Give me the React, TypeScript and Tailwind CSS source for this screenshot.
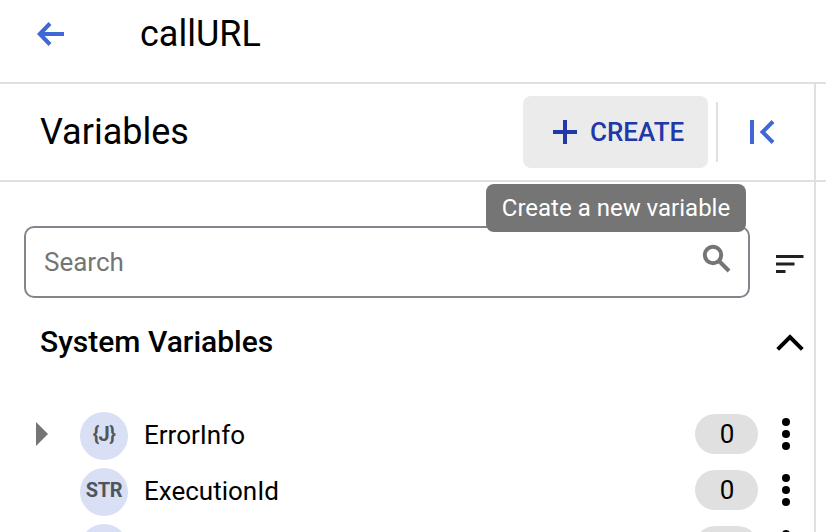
const rows = [
  { name: 'ErrorInfo', type: '{J}', count: '0', expandable: true, tracking: 'tracking-[-0.6px]' },
  { name: 'ExecutionId', type: 'STR', count: '0', expandable: false, tracking: 'tracking-[-0.4px]' },
  { name: '', type: '', count: '', expandable: false, tracking: '' },
];

function VariableRow({ name, type, count, expandable, tracking }: (typeof rows)[number]) {
  return (
    <div className="flex h-14 shrink-0 items-start">
      <div className="flex h-11 w-20 shrink-0 items-center pl-9">
        {expandable && (
          <svg width="12" height="24" viewBox="0 0 12 24" fill="#757575">
            <path d="M0 0 12 12 0 24z" />
          </svg>
        )}
      </div>
      <div className={`flex h-12 w-12 shrink-0 justify-center rounded-full bg-[#d9dff5] text-[20px] leading-[45px] font-bold text-[#50555b] ${tracking}`}>
        {type}
      </div>
      <div className="ml-4 flex-1 text-[26px] leading-[47px]">{name}</div>
      <div className="mt-0.5 h-10 w-[63px] rounded-full bg-[#e0e0e0] pl-px text-center text-[26px] leading-10">{count}</div>
      <svg className="mt-1.5 mr-6 ml-6 h-8 w-2" viewBox="0 0 8 32">
        <circle cx="4" cy="4" r="4" />
        <circle cx="4" cy="16" r="4" />
        <circle cx="4" cy="28" r="4" />
      </svg>
    </div>
  );
}

export default function App() {
  return (
    <div className="flex h-[532px] w-[826px] flex-col overflow-hidden bg-white font-[Roboto,sans-serif] text-black">
      <header className="flex h-[84px] shrink-0 items-start border-b-2 border-[#e0e0e0] pl-9">
        <svg className="mt-5 h-7 w-[30px]" viewBox="0 0 30 28" fill="none" stroke="#3f68d6" strokeWidth="4">
          <path d="M28 14H4M14 3.5 3.8 14 14 24.5" />
        </svg>
        <h1 className="ml-[74px] text-[36px] leading-[68px]">callURL</h1>
      </header>

      <div className="flex min-h-0 flex-1">
        <main className="flex w-[816px] shrink-0 flex-col border-r-2 border-[#e0e0e0]">
          <div className="flex h-[98px] shrink-0 items-center border-b-2 border-[#e0e0e0] pl-10">
            <h2 className="flex-1 text-[36px] leading-[96px]">Variables</h2>
            <div className="relative">
              <button className="flex h-[72px] w-[185px] items-center rounded-lg bg-[#ebebeb] pl-[30px] text-[26px] font-medium text-[#2138a8]">
                <svg className="mr-[13px] h-6 w-6" viewBox="0 0 24 24" fill="none" stroke="currentColor" strokeWidth="4">
                  <path d="M12 0v24M0 12h24" />
                </svg>
                CREATE
              </button>
              <div className="absolute top-[88px] -left-[37px] h-12 w-[260px] rounded-lg bg-[#757575] text-center text-[24px] leading-12 whitespace-nowrap text-white">
                Create a new variable
              </div>
            </div>
            <div className="ml-2 h-[60px] w-0.5 bg-[#e0e0e0]" />
            <svg className="mr-[38px] ml-8 h-6 w-[26px]" viewBox="0 0 26 24" fill="none" stroke="#3f68d6" strokeWidth="4">
              <path d="M2 0v24M23 1.5 12.5 12 23 22.5" />
            </svg>
          </div>

          <div className="mt-11 flex h-[72px] shrink-0 items-center pl-6">
            <div className="flex h-[72px] w-[726px] items-start rounded-[10px] border-2 border-[#80868b] pl-[18px]">
              <span className="flex-1 text-[26px] leading-[68px] text-[#757575]">Search</span>
              <svg className="mt-4 mr-4 h-[30px] w-[30px]" viewBox="0 0 30 30" fill="none" stroke="#757575" strokeWidth="4">
                <circle cx="11" cy="11" r="8.2" />
                <path d="m16.5 16.5 10.5 10.5" />
              </svg>
            </div>
            <svg className="mt-1 ml-[26px] h-[18px] w-7" viewBox="0 0 28 18" fill="#202124">
              <path d="M0 0h27.5v3H0zM0 7.5h18.5v3H0zM0 15h9.5v3H0z" />
            </svg>
          </div>

          <div className="flex h-[88px] shrink-0 items-center justify-between pr-2.5 pl-10">
            <h3 className="text-[30px] leading-[88px] font-medium">System Variables</h3>
            <svg className="h-[18px] w-7" viewBox="0 0 28 18" fill="none" stroke="black" strokeWidth="4">
              <path d="M1.7 16.3 14 4 26.3 16.3" />
            </svg>
          </div>

          <div className="mt-[26px] flex min-h-0 flex-1 flex-col overflow-hidden">
            {rows.map((row, i) => (
              <VariableRow key={i} {...row} />
            ))}
          </div>
        </main>
        <div className="h-[98px] flex-1 border-b-2 border-[#e0e0e0]" />
      </div>
    </div>
  );
}
